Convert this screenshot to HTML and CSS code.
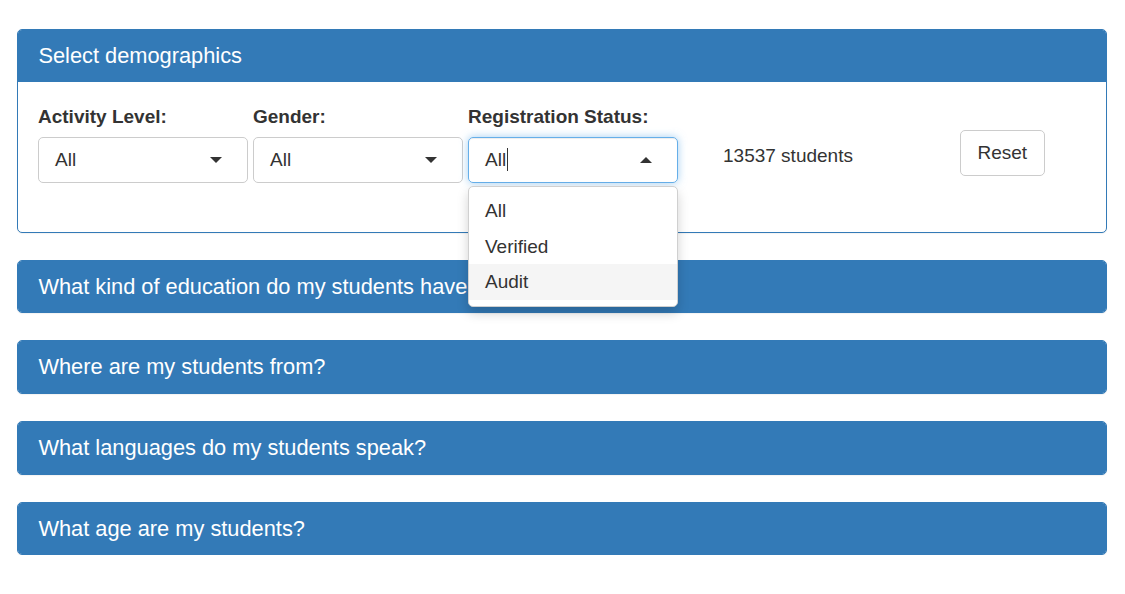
FILE: index.html
```html
<!DOCTYPE html>
<html>
<head>
<meta charset="utf-8">
<link rel="stylesheet" href="styles.css">
</head>
<body>
<div class="page">
  <section class="panel panel-open">
    <div class="panel-heading">Select demographics</div>
    <div class="panel-body">
      <div class="filter">
        <label class="filter-label">Activity Level:</label>
        <div class="select-wrap">
          <div class="select"><span class="select-value">All</span><span class="caret caret-down"></span></div>
        </div>
      </div>
      <div class="filter">
        <label class="filter-label">Gender:</label>
        <div class="select-wrap">
          <div class="select"><span class="select-value">All</span><span class="caret caret-down"></span></div>
        </div>
      </div>
      <div class="filter">
        <label class="filter-label">Registration Status:</label>
        <div class="select-wrap">
          <div class="select select-focus"><span class="select-value">All<span class="cursor"></span></span><span class="caret caret-up"></span></div>
          <ul class="dropdown">
            <li class="option">All</li>
            <li class="option">Verified</li>
            <li class="option option-active">Audit</li>
          </ul>
        </div>
      </div>
      <div class="count">13537 students</div>
      <button class="reset">Reset</button>
    </div>
  </section>
  <section class="panel"><div class="panel-heading">What kind of education do my students have?</div></section>
  <section class="panel"><div class="panel-heading">Where are my students from?</div></section>
  <section class="panel"><div class="panel-heading">What languages do my students speak?</div></section>
  <section class="panel"><div class="panel-heading">What age are my students?</div></section>
</div>
</body>
</html>
```
FILE: styles.css
```css
* { box-sizing: border-box; }
html, body { margin: 0; padding: 0; background: #fff; }
body {
  font-family: "Liberation Sans", Arial, sans-serif;
  color: #333;
  font-size: 19px;
}
.page {
  padding: 29px 18px 0 17px;
  display: flex;
  flex-direction: column;
  gap: 27.2px;
}
.panel {
  border: 1px solid #337ab7;
  border-radius: 5px;
  background: #fff;
  box-shadow: 0 1px 1px rgba(0,0,0,0.05);
}
.panel-heading {
  background: #337ab7;
  color: #fff;
  font-size: 21.8px;
  height: 51.5px;
  line-height: 51.5px;
  padding: 0 20.4px;
  border-radius: 4px 4px 0 0;
  white-space: nowrap;
  overflow: hidden;
}
.panel:not(.panel-open) .panel-heading { border-radius: 4px; }
.panel-body {
  display: flex;
  align-items: flex-start;
  padding: 24px 20px 49px;
}
.filter {
  width: 210px;
  margin-right: 5px;
}
.filter-label {
  display: block;
  font-weight: bold;
  font-size: 19px;
  line-height: 22px;
  margin-bottom: 9px;
}
.select-wrap { position: relative; }
.select {
  height: 46px;
  border: 1px solid #ccc;
  border-radius: 5px;
  display: flex;
  align-items: center;
  justify-content: space-between;
  padding: 0 25px 0 16px;
  font-size: 19px;
}
.select-focus {
  border-color: #66afe9;
  box-shadow: inset 0 1px 1px rgba(0,0,0,.075), 0 0 8px rgba(102,175,233,.6);
}
.select-value { display: inline-flex; align-items: center; }
.cursor {
  display: inline-block;
  width: 1px;
  height: 23px;
  background: #333;
  margin-left: 1px;
}
.caret { width: 0; height: 0; border-left: 6px solid transparent; border-right: 6px solid transparent; }
.caret-down { border-top: 6px solid #333; }
.caret-up { border-bottom: 6px solid #333; }
.dropdown {
  position: absolute;
  left: 0;
  top: calc(100% + 3px);
  width: 210px;
  margin: 0;
  padding: 6.5px 0;
  list-style: none;
  background: #fff;
  border: 1px solid #d0d0d0;
  border-radius: 5px;
  box-shadow: 0 6px 12px rgba(0,0,0,.175);
  z-index: 10;
}
.option {
  height: 35.5px;
  line-height: 35.5px;
  padding: 0 16px;
  font-size: 19px;
}
.option-active { background: #f5f5f5; }
.count {
  margin-left: 40px;
  margin-top: 39px;
  width: 237px;
  font-size: 19px;
  line-height: 22px;
}
.reset {
  margin-top: 24px;
  height: 46px;
  padding: 0 16.5px;
  background: #fff;
  border: 1px solid #ccc;
  border-radius: 5px;
  font-family: inherit;
  font-size: 19px;
  color: #333;
}
```
